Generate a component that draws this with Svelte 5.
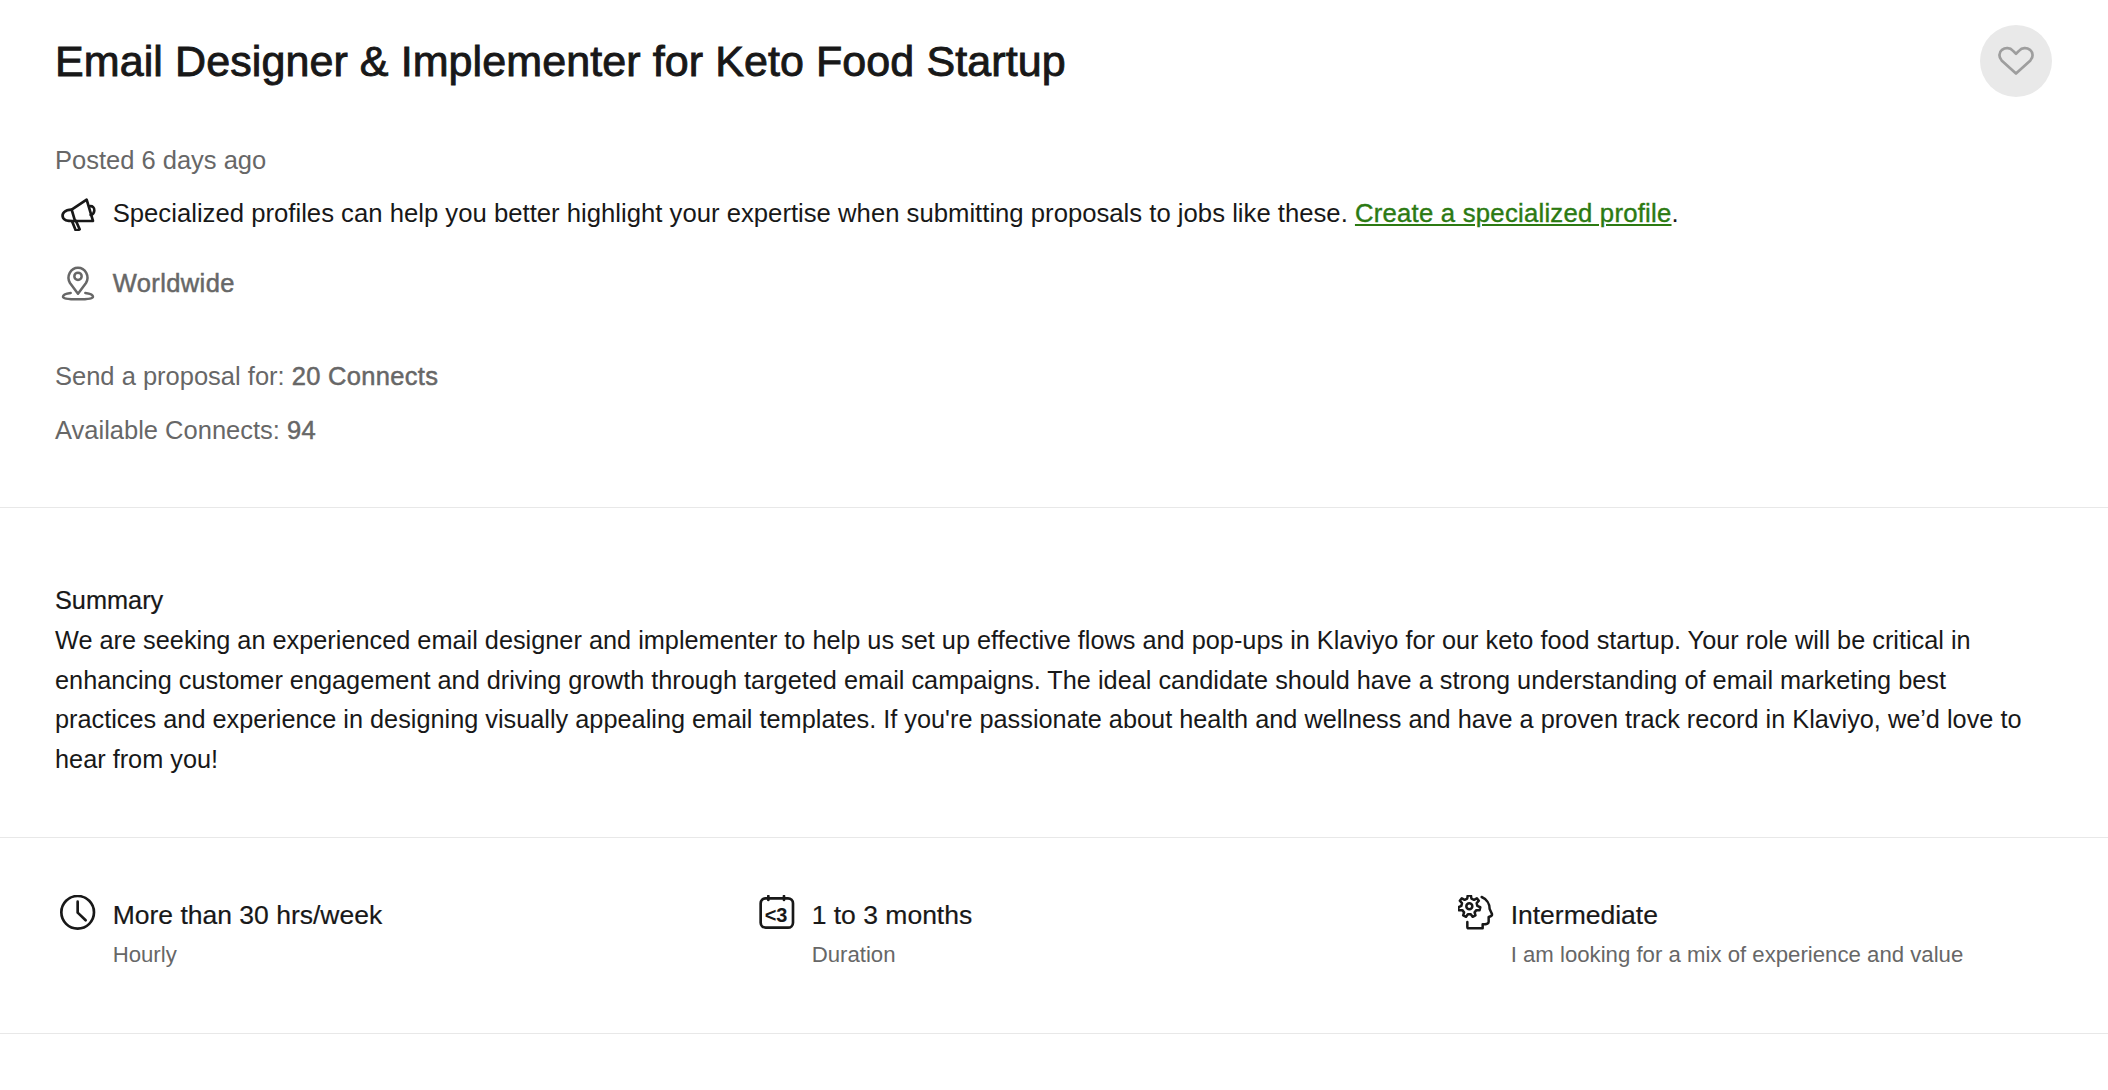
<script lang="ts">
  const stats = [
    { icon: 'clock', title: 'More than 30 hrs/week', sub: 'Hourly' },
    { icon: 'calendar', title: '1 to 3 months', sub: 'Duration' },
    { icon: 'head', title: 'Intermediate', sub: 'I am looking for a mix of experience and value' }
  ];

  // gear outline for the skill icon, coordinates are 3x px of the icon crop
  function gearPath(cx: number, cy: number, inner: number, outer: number, teeth: number): string {
    const pts: string[] = [];
    const step = (Math.PI * 2) / teeth;
    for (let i = 0; i < teeth; i++) {
      const a = i * step - Math.PI / 2;
      const offs = [[-0.3, inner], [-0.16, outer], [0.16, outer], [0.3, inner]];
      for (const [o, r] of offs) {
        const t = a + o * step;
        pts.push(`${(cx + Math.cos(t) * r).toFixed(1)} ${(cy + Math.sin(t) * r).toFixed(1)}`);
      }
    }
    return 'M' + pts.join('L') + 'Z';
  }
</script>

<main>
  <section class="head">
    <div class="title-row">
      <h1>Email Designer &amp; Implementer for Keto Food Startup</h1>
      <button class="save" aria-label="Save job">
        <svg width="36" height="30" viewBox="0 0 36 30" fill="none" stroke="#9e9e9e" stroke-width="2.7" stroke-linejoin="round">
          <path d="M18 27.5 3.6 14.4C.4 11 1 6.200 4 3.800 7.300 1.300 12 1.600 14.800 4.600L18 7.800l3.200-3.200C24 1.600 28.700 1.300 32 3.800c3 2.400 3.600 7.200.4 10.600Z" />
        </svg>
      </button>
    </div>
    <p class="posted">Posted 6 days ago</p>
    <div class="line notice">
      <svg class="icon" viewBox="60 44 110 110" fill="none" stroke="#181818" stroke-width="8" stroke-linejoin="round" stroke-linecap="round">
        <path d="M95 88 140 58l19 64H105Z" />
        <path d="M95 88C74 88 64 100 69 112c3 8 12 11 36 10" />
        <path d="M148 78c10-2 16 4 15 13-1 8-5 12-11 13" />
        <path d="M97 125l11 27 11-5-11-25" />
      </svg>
      <span>Specialized profiles can help you better highlight your expertise when submitting proposals to jobs like these. <a href="#profile">Create a specialized profile</a>.</span>
    </div>
    <div class="line place">
      <svg class="icon" viewBox="60 254 110 110" fill="none" stroke="#676767" stroke-width="7.500" stroke-linejoin="round" stroke-linecap="round">
        <path d="M114 340 90 308c-12-20 2-46 24-46s36 26 24 46Z" />
        <circle cx="114" cy="288" r="11" />
        <path d="M92 338c-14 2-23 6-23 11 0 6 20 8 45 8s45-2 45-8c0-5-9-9-23-11" />
      </svg>
      <strong>Worldwide</strong>
    </div>
    <p class="connects first">Send a proposal for: <strong>20 Connects</strong></p>
    <p class="connects">Available Connects: <strong>94</strong></p>
  </section>

  <section class="summary">
    <h2>Summary</h2>
    <p>We are seeking an experienced email designer and implementer to help us set up effective flows and pop-ups in Klaviyo for our keto food startup. Your role will be critical in enhancing customer engagement and driving growth through targeted email campaigns. The ideal candidate should have a strong understanding of email marketing best practices and experience in designing visually appealing email templates. If you're passionate about health and wellness and have a proven track record in Klaviyo, we’d love to hear from you!</p>
  </section>

  <section class="stats">
    {#each stats as s}
      <div class="stat">
        {#if s.icon === 'clock'}
          <svg class="icon" viewBox="60 42 110 110" fill="none" stroke="#181818" stroke-width="8" stroke-linecap="round" stroke-linejoin="round">
            <circle cx="113" cy="94" r="49" />
            <path d="M113 62v33l24 23" />
          </svg>
        {:else if s.icon === 'calendar'}
          <svg class="icon" viewBox="57 42 110 110" fill="none" stroke="#181818" stroke-width="8" stroke-linecap="round">
            <rect x="62" y="52" width="97" height="88" rx="15" />
            <path d="M85 45v12M132 45v12" />
            <text x="74" y="124" class="lt3" fill="#181818" stroke="none">&lt;3</text>
          </svg>
        {:else}
          <svg class="icon" viewBox="54 42 110 110" fill="none" stroke="#181818" stroke-width="7.500" stroke-linecap="round" stroke-linejoin="round">
            <path d={gearPath(88, 76, 24, 33, 7)} />
            <circle cx="88" cy="76" r="9" />
            <path d="M125 48c14 6 24 20 24 36l7 15c1 4-2 7-10 9v14c0 6-6 8-18 8v12H86c-2 0-4-2-4-5v-14" />
          </svg>
        {/if}
        <div class="stat-text">
          <div class="stat-title">{s.title}</div>
          <div class="stat-sub">{s.sub}</div>
        </div>
      </div>
    {/each}
  </section>
</main>

<style>
  :global(body) {
    background: #fff;
    font-family: "Liberation Sans", Arial, sans-serif;
    color: #181818;
    font-size: 25.5px;
    line-height: 40px;
  }

  section {
    border-bottom: 1.33px solid #e8e8e8;
  }

  p, h1, h2 {
    margin: 0;
  }

  .head {
    padding: 25px 0 57px 55px;
  }

  .title-row {
    display: flex;
    align-items: center;
    justify-content: space-between;
    padding-right: 56px;
  }

  h1 {
    font-size: 43px;
    font-weight: 400;
    letter-spacing: 0.09px;
    line-height: 72px;
    -webkit-text-stroke: 0.9px #181818;
  }

  .save {
    display: flex;
    align-items: center;
    justify-content: center;
    width: 72px;
    height: 72px;
    padding: 0;
    border: none;
    border-radius: 50%;
    background: #e9e9e9;
  }

  .posted {
    margin-top: 43px;
    color: #676767;
  }

  .line {
    display: flex;
    align-items: center;
    margin-top: 13px;
  }

  .notice {
    font-size: 25.7px;
  }

  .place {
    margin-top: 30px;
  }

  .icon {
    width: 36.67px;
    height: 36.67px;
    flex: none;
    margin-left: 5px;
    margin-right: 16px;
  }

  .notice a {
    color: #2c7a12;
    letter-spacing: 0.24px;
    -webkit-text-stroke: 0.4px #2c7a12;
  }

  .place strong {
    color: #676767;
    font-weight: 400;
    letter-spacing: 0.4px;
    -webkit-text-stroke: 0.5px #676767;
  }

  .connects {
    color: #676767;
    margin-top: 14px;
  }

  .connects.first {
    margin-top: 53px;
  }

  .connects strong {
    font-weight: 400;
    letter-spacing: 0.3px;
    -webkit-text-stroke: 0.5px #676767;
  }

  .summary {
    padding: 72px 58px 58px 55px;
    font-size: 25.3px;
  }

  h2 {
    font-size: inherit;
    font-weight: 400;
    -webkit-text-stroke: 0.2px #181818;
  }

  .summary p {
    line-height: 39.6px;
    padding-top: 1px;
  }

  .stats {
    display: grid;
    grid-template-columns: repeat(3, 699px);
    padding: 57px 0 58px 55px;
  }

  .stat {
    display: flex;
    align-items: flex-start;
  }

  .stat-title {
    font-size: 26.5px;
    -webkit-text-stroke: 0.2px #181818;
  }

  .stat-sub {
    font-size: 22.2px;
    color: #676767;
  }

  .lt3 {
    font: bold 60px "Liberation Sans", sans-serif;
  }
</style>
